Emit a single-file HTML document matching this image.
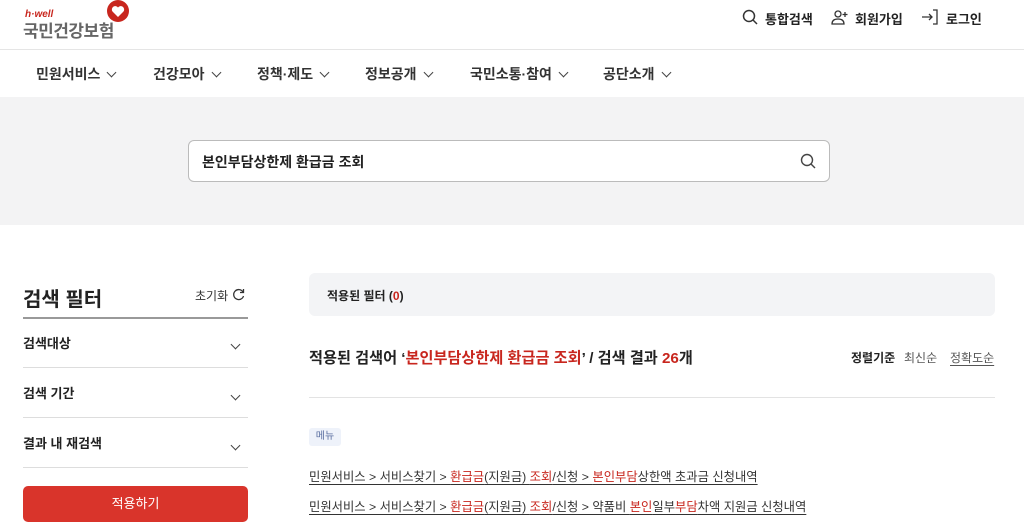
<!DOCTYPE html>
<html><head><meta charset="utf-8"><style>
*{margin:0;padding:0;box-sizing:border-box}
body{width:1024px;height:528px;overflow:hidden;background:#fff;font-family:"Liberation Sans","Noto Sans CJK KR",sans-serif;color:#222;position:relative}
.a{position:absolute;white-space:nowrap}
.r{color:#c8261e}
.chev{display:inline-block;width:7px;height:7px;border-right:1.5px solid #444;border-bottom:1.5px solid #444;transform:rotate(45deg);margin-left:8px;position:relative;top:-3px}
.line{position:absolute;height:1px;background:#ddd}
.u{text-decoration:underline;text-underline-offset:3px}
</style></head><body>
<div class="a" style="left:25px;top:9px;font-size:10px;font-style:italic;font-weight:bold;color:#c8261e">h·well</div>
<div class="a" style="left:23px;top:17px;font-size:17px;color:#666;font-weight:bold;letter-spacing:-0.5px">국민건강보험</div>
<svg class="a" style="left:104px;top:0" width="28" height="26" viewBox="0 0 28 26"><circle cx="14" cy="11" r="11" fill="#c8261e"/><path d="M14 17 L8.5 11.5 A3 3 0 0 1 14 7.5 A3 3 0 0 1 19.5 11.5 Z" fill="#fff"/></svg>
<svg class="a" style="left:742px;top:9px" width="16" height="16" viewBox="0 0 16 16" fill="none" stroke="#333" stroke-width="1.5"><circle cx="7" cy="7" r="5.5"/><path d="M11 11l4 4"/></svg>
<div class="a" style="left:765px;top:9px;font-size:13px;font-weight:bold">통합검색</div>
<svg class="a" style="left:831px;top:9px" width="18" height="16" viewBox="0 0 18 16" fill="none" stroke="#333" stroke-width="1.3"><circle cx="7" cy="5" r="3"/><path d="M1 15c0-4 3-5 6-5s6 1 6 5z"/><path d="M14 3v5M11.5 5.5h5"/></svg>
<div class="a" style="left:855px;top:9px;font-size:13px;font-weight:bold">회원가입</div>
<svg class="a" style="left:921px;top:9px" width="18" height="16" viewBox="0 0 18 16" fill="none" stroke="#333" stroke-width="1.3"><path d="M1 8h10M8 5l3 3-3 3M12 1h4v14h-4"/></svg>
<div class="a" style="left:946px;top:9px;font-size:13px;font-weight:bold">로그인</div>
<div class="line" style="left:0;top:49px;width:1024px;background:#e5e5e5"></div>
<div class="a" style="left:36px;top:64px;font-size:14px;font-weight:bold;color:#333">민원서비스<span class="chev"></span></div>
<div class="a" style="left:153px;top:64px;font-size:14px;font-weight:bold;color:#333">건강모아<span class="chev"></span></div>
<div class="a" style="left:257px;top:64px;font-size:14px;font-weight:bold;color:#333">정책·제도<span class="chev"></span></div>
<div class="a" style="left:365px;top:64px;font-size:14px;font-weight:bold;color:#333">정보공개<span class="chev"></span></div>
<div class="a" style="left:470px;top:64px;font-size:14px;font-weight:bold;color:#333">국민소통·참여<span class="chev"></span></div>
<div class="a" style="left:603px;top:64px;font-size:14px;font-weight:bold;color:#333">공단소개<span class="chev"></span></div>
<div class="a" style="left:0;top:97px;width:1024px;height:128px;background:#f3f3f4"></div>
<div class="a" style="left:188px;top:140px;width:642px;height:42px;background:#fff;border:1px solid #bbb;border-radius:6px"></div>
<div class="a" style="left:202px;top:152px;font-size:14px;font-weight:bold">본인부담상한제 환급금 조회</div>
<svg class="a" style="left:800px;top:153px" width="16" height="16" viewBox="0 0 16 16" fill="none" stroke="#444" stroke-width="1.4"><circle cx="7" cy="7" r="5.5"/><path d="M11 11l4 4"/></svg>

<div class="a" style="left:23px;top:283px;font-size:20px;font-weight:bold">검색 필터</div>
<div class="a" style="left:195px;top:287px;font-size:12px;color:#333">초기화</div>
<svg class="a" style="left:232px;top:288px" width="13" height="13" viewBox="0 0 13 13" fill="none" stroke="#333" stroke-width="1.3"><path d="M11 4A5 5 0 1 0 11.5 8"/><path d="M11.5 1v3.5H8"/></svg>
<div class="line" style="left:23px;top:317px;width:225px;height:1.5px;background:#999"></div>
<div class="a" style="left:23px;top:333px;font-size:13px;font-weight:bold">검색대상</div>
<div class="a" style="left:232px;top:338px"><span class="chev" style="margin:0"></span></div>
<div class="line" style="left:23px;top:367px;width:225px"></div>
<div class="a" style="left:23px;top:383px;font-size:13px;font-weight:bold">검색 기간</div>
<div class="a" style="left:232px;top:389px"><span class="chev" style="margin:0"></span></div>
<div class="line" style="left:23px;top:417px;width:225px"></div>
<div class="a" style="left:23px;top:433px;font-size:13px;font-weight:bold">결과 내 재검색</div>
<div class="a" style="left:232px;top:439px"><span class="chev" style="margin:0"></span></div>
<div class="line" style="left:23px;top:467px;width:225px"></div>
<div class="a" style="left:23px;top:486px;width:225px;height:36px;background:#d9342b;border-radius:5px;color:#fff;font-size:13px;text-align:center;line-height:36px">적용하기</div>

<div class="a" style="left:309px;top:273px;width:686px;height:43px;background:#f3f4f6;border-radius:6px"></div>
<div class="a" style="left:327px;top:287px;font-size:12px;font-weight:bold">적용된 필터 (<span class="r">0</span>)</div>
<div class="a" style="left:309px;top:346px;font-size:15.2px;font-weight:bold">적용된 검색어 ‘<span class="r">본인부담상한제 환급금 조회</span>’ / 검색 결과 <span class="r">26</span>개</div>
<div class="a" style="left:851px;top:349px;font-size:12px;font-weight:bold">정렬기준</div>
<div class="a" style="left:904px;top:349px;font-size:12px;color:#555">최신순</div>
<div class="a u" style="left:950px;top:349px;font-size:12px;color:#555">정확도순</div>
<div class="line" style="left:309px;top:397px;width:686px;background:#e3e3e3"></div>
<div class="a" style="left:309px;top:428px;width:32px;height:18px;background:#eef2fa;border-radius:3px;font-size:10px;color:#5a6ea0;text-align:center;line-height:18px">메뉴</div>
<div class="a u" style="left:309px;top:467px;font-size:12.3px;color:#333">민원서비스 &gt; 서비스찾기 &gt; <span class="r">환급금</span>(지원금) <span class="r">조회</span>/신청 &gt; <span class="r">본인부담</span>상한액 초과금 신청내역</div>
<div class="a u" style="left:309px;top:497px;font-size:12.3px;color:#333">민원서비스 &gt; 서비스찾기 &gt; <span class="r">환급금</span>(지원금) <span class="r">조회</span>/신청 &gt; 약품비 <span class="r">본인</span>일부<span class="r">부담</span>차액 지원금 신청내역</div>
</body></html>
